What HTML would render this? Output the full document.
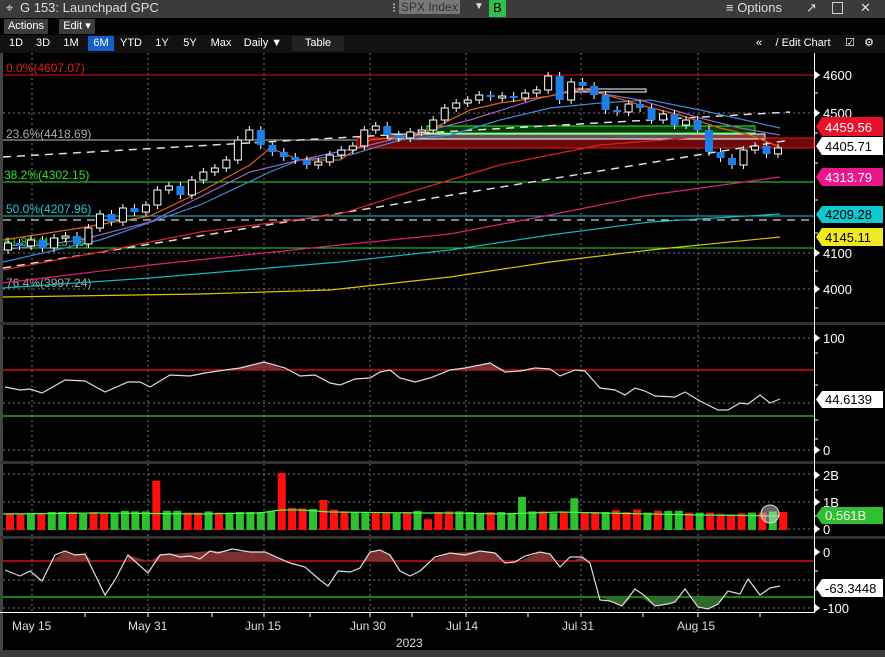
<!DOCTYPE html><html><head><meta charset="utf-8"><style>
body{margin:0;width:885px;height:657px;background:#000;overflow:hidden;font-family:"Liberation Sans",sans-serif;}
.top{position:absolute;left:0;top:0;width:885px;height:18px;background:#3b3b3b;color:#ddd;font-size:13px;}
.bar{position:absolute;left:0;width:885px;background:#000;}
.b{position:absolute;top:1px;height:15px;font-size:11px;color:#fff;line-height:15px;text-align:center;}
svg text{font-family:"Liberation Sans",sans-serif;}
</style></head><body>
<div class="top">
<span style="position:absolute;left:6px;top:0">⌖</span>
<span style="position:absolute;left:20px;top:0;font-size:13px">G 153: Launchpad GPC</span>
<span style="position:absolute;left:392px;top:0">⁝</span>
<span style="position:absolute;left:399px;top:0;background:#777;color:#333;padding:0 2px;font-size:12px">SPX Index</span>
<span style="position:absolute;left:474px;top:1px;font-size:10px">▼</span>
<span style="position:absolute;left:489px;top:0;width:17px;height:17px;background:#2ec24a;color:#000;text-align:center;font-size:13px">B</span>
<span style="position:absolute;left:726px;top:0">≡ Options</span>
<span style="position:absolute;left:806px;top:0">↗</span>
<span style="position:absolute;left:832px;top:2px;width:9px;height:10px;border:1px solid #ccc"></span>
<span style="position:absolute;left:860px;top:0">✕</span>
</div>
<div class="bar" style="top:18px;height:17px">
<div class="b" style="left:4px;width:44px;background:#3c3c3c">Actions ▾</div>
<div class="b" style="left:59px;width:36px;background:#3c3c3c">Edit ▾</div>
</div>
<div class="bar" style="top:35px;height:18px;background:#111">
<div class="b" style="left:6px;width:20px">1D</div><div class="b" style="left:33px;width:20px">3D</div>
<div class="b" style="left:61px;width:20px">1M</div><div class="b" style="left:88px;width:26px;background:#1560c8">6M</div>
<div class="b" style="left:118px;width:26px">YTD</div><div class="b" style="left:152px;width:20px">1Y</div>
<div class="b" style="left:180px;width:20px">5Y</div><div class="b" style="left:208px;width:26px">Max</div>
<div class="b" style="left:240px;width:46px">Daily ▼</div><div class="b" style="left:292px;width:52px;background:#222">Table</div>
<div class="b" style="left:752px;width:14px">«</div><div class="b" style="left:768px;width:70px">/ Edit Chart</div>
<div class="b" style="left:843px;width:14px">☑</div><div class="b" style="left:862px;width:14px">⚙</div>
</div>
<svg id="s" width="885" height="604" viewBox="0 53 885 604" style="position:absolute;left:0;top:53px">
<rect x="0" y="53" width="885" height="604" fill="#000"/>
<rect x="0" y="53" width="3" height="597" fill="#444"/>
<rect x="0" y="650" width="885" height="7" fill="#3a3a3a"/>
<rect x="0" y="322" width="885" height="3" fill="#333"/>
<rect x="0" y="461" width="885" height="3" fill="#333"/>
<rect x="0" y="536" width="885" height="3" fill="#333"/>
<rect x="0" y="612" width="814" height="1" fill="#fff"/>
<rect x="814" y="53" width="1" height="560" fill="#fff"/>
<g id="g"></g>
</svg>
<script>
var g=document.getElementById('g'),h='';
function L(x1,y1,x2,y2,c,w,d){h+='<line x1="'+x1+'" y1="'+y1+'" x2="'+x2+'" y2="'+y2+'" stroke="'+c+'" stroke-width="'+(w||1)+'"'+(d?' stroke-dasharray="'+d+'"':'')+'/>';}
function P(p,c,w,d){h+='<polyline fill="none" points="'+p+'" stroke="'+c+'" stroke-width="'+(w||1)+'"'+(d?' stroke-dasharray="'+d+'"':'')+'/>';}
function T(x,y,t,c,s){h+='<text x="'+x+'" y="'+y+'" fill="'+c+'" font-size="'+(s||12)+'">'+t+'</text>';}
[32,148,264,370,466,581,698].forEach(function(x){[[53,322],[325,461],[464,536],[539,612]].forEach(function(r){L(x,r[0],x,r[1],'#777',1,'2,3');});});
[113,253,289,338,403,450,474,502,529,580,608].forEach(function(y){L(3,y,814,y,'#777',1,'2,3');});
L(3,75,814,75,'#e01010');L(3,140,814,140,'#bbb');L(3,182,814,182,'#2ee02e');L(3,216,814,216,'#20c8d0');L(3,220,814,220,'#fff',1,'8,6');L(3,248,814,248,'#20e020');
T(6,72,'0.0%(4607.07)','#e02020');T(6,138,'23.6%(4418.69)','#aaa');T(4,179,'38.2%(4302.15)','#2ee02e');T(6,213,'50.0%(4207.96)','#20c8d0');T(4,246,'61.8%(4113.78)','#2ee02e');T(6,287,'76.4%(3997.24)','#aaa');
h+='<rect x="357" y="138" width="457" height="10" fill="#6a0a0a" stroke="#ff1010"/>';
h+='<rect x="427" y="126" width="328" height="7" fill="#0a3a0a" stroke="#20ff20"/>';
h+='<rect x="388" y="134" width="377" height="5" fill="#555" stroke="#fff"/>';
h+='<rect x="575" y="89" width="71" height="3" fill="none" stroke="#fff"/>';
L(3,157,790,112,'#ddd',1.5,'8,6');L(3,268,790,140,'#ddd',1.5,'8,6');
P('3,297 200,294 330,290 450,277 550,262 650,250 780,237','#d8c800',1.2);
P('3,288 150,278 340,262 450,250 550,235 650,222 780,214','#10b8c8',1.2);
P('3,283 150,265 340,245 450,234 550,215 650,195 780,177','#e0207a',1.2);
P('3,270 100,252 200,232 340,214 400,195 500,165 600,145 700,137 770,138','#e02020',1.2);
P('3,262 100,240 200,205 270,172 300,160 350,155 400,140 450,135 500,120 550,108 600,103 650,100 700,110 780,128','#3a8ad8',1.2);
P('3,250 80,240 150,222 250,172 300,160 370,145 470,120 540,98 580,90 640,100 700,118 740,128 780,135','#9a60c0',1.2);
P('3,240 80,228 150,216 200,192 250,165 270,148 300,160 340,160 370,140 420,135 470,110 500,103 550,96 580,88 600,93 640,105 680,115 720,128 750,135 780,147','#e06010',1.2);
var cy=[243,246,240,248,238,236,244,228,214,222,208,212,205,190,186,195,180,172,168,160,140,130,145,152,157,160,165,162,155,150,146,130,126,135,138,132,130,120,108,103,100,95,97,96,98,93,90,76,100,82,86,95,110,112,104,108,120,114,125,120,130,152,158,165,150,146,154,148];
var n=cy.length,sp=(778-8)/(n-1),pv=250;
cy.forEach(function(c,i){var x=8+i*sp,o=pv,top=Math.min(o,c),bt=Math.max(o,c);if(bt-top<2)bt=top+2;
L(x,top-4,x,bt+4,'#fff',1);
if(c<o)h+='<rect x="'+(x-3.5)+'" y="'+top+'" width="7" height="'+(bt-top)+'" fill="#000" stroke="#fff"/>';
else h+='<rect x="'+(x-4)+'" y="'+top+'" width="8" height="'+(bt-top)+'" fill="#1f7fe8"/>';pv=c;});
L(3,370,814,370,'#ff1010',1.2);L(3,416,814,416,'#20d020',1.2);
var rsi='5,387 20,390 30,389 42,393 65,380 85,381 105,392 128,382 140,382 150,387 170,375 190,376 205,373 225,370 240,368 264,362 285,368 300,376 315,375 330,383 340,385 355,379 370,378 380,372 390,370 400,378 415,382 430,378 450,370 465,368 490,363 505,372 520,371 535,368 550,369 560,376 575,370 585,371 600,388 615,390 625,395 635,388 645,391 655,396 675,397 685,392 700,401 718,410 728,410 740,403 748,404 760,395 770,403 780,399';
h+='<polygon points="225,370 240,368 264,362 285,370" fill="#7a3030"/><polygon points="450,370 465,368 490,363 505,370" fill="#7a3030"/>';
P(rsi,'#ddd',1.2);
var hs=[28,27,27,27,30,30,30,27,30,29,29,32,31,31,82,32,32,29,29,31,29,29,30,30,30,32,95,37,36,35,35,34,31,50,30,30,29,28,30,32,18,30,31,31,30,28,30,30,28,32,31,31,28,30,53,30,30,30,33,30,34,29,32,32,32,29,29,29,27,26,28,29,29,31,30,28,32,27,29,28];
hs[49]=55;hs[30]=50;hs[33]=30;hs[14]=82;
var reds=[0,1,3,6,8,9,14,17,18,20,26,27,28,30,31,32,35,36,38,40,41,42,46,51,53,55,56,58,59,60,62,65,67,68,69,70,72,74];
for(var i=0;i<75;i++){var x=6+i*10.45,hh=hs[i]*0.6;var c=reds.indexOf(i)>=0?'#ff1010':'#2ec02e';h+='<rect x="'+x+'" y="'+(530-hh)+'" width="8" height="'+hh+'" fill="'+c+'"/>';}
P('3,514 100,513 200,514 260,513 280,510 300,510 330,512 420,513 450,513 500,514 560,512 600,513 650,514 700,515 780,516','#40ff40',1.2);
h+='<circle cx="770" cy="514" r="9" fill="rgba(220,220,220,0.45)" stroke="#ddd"/>';
L(3,561,814,561,'#ff1010',1.2);L(3,597,814,597,'#20d020',1.2);
var os='5,570 20,576 30,571 42,581 55,555 65,551 75,555 85,554 105,595 115,580 128,555 148,573 160,555 170,554 180,557 190,556 200,559 210,551 218,553 232,549 250,552 265,552 290,563 305,567 320,580 328,586 338,571 350,572 360,568 370,552 380,550 390,555 400,571 410,576 420,571 435,557 450,553 465,555 480,551 495,553 505,563 515,562 525,556 540,552 550,554 560,567 570,557 582,557 590,563 600,600 610,601 622,606 635,589 645,596 655,606 668,604 675,602 685,589 698,607 708,609 718,604 728,591 740,594 748,579 760,595 770,588 780,586';
h+='<polygon points="52,561 65,551 75,555 85,554 92,561" fill="#7a3030"/><polygon points="128,561 128,555 148,561" fill="#7a3030"/><polygon points="150,561 160,555 210,551 250,552 265,552 285,561" fill="#7a3030"/><polygon points="365,561 370,552 380,550 390,555 395,561" fill="#7a3030"/><polygon points="430,561 450,553 480,551 495,553 503,561" fill="#7a3030"/><polygon points="520,561 540,552 550,554 556,561" fill="#7a3030"/><polygon points="572,561 582,557 590,561" fill="#7a3030"/>';
h+='<polygon points="600,597 610,601 622,606 632,597" fill="#2e6a2e"/><polygon points="640,597 655,606 668,604 675,602 680,597" fill="#2e6a2e"/><polygon points="692,597 698,607 708,609 718,604 725,597" fill="#2e6a2e"/>';
P(os,'#ddd',1.2);
function tick(y,t,c){L(814,y,820,y,'#fff');h+='<polygon points="815,'+(y-4)+' 820,'+y+' 815,'+(y+4)+'" fill="'+(c||'#fff')+'"/>';T(823,y+5,t,c||'#fff',13);}
tick(75,'4600');tick(113,'4500');tick(253,'4100');tick(289,'4000');tick(338,'100');tick(450,'0');
tick(475,'2B','#fff');tick(502,'1B');tick(529,'0');tick(552,'0');tick(608,'-100');
[93,133,163,200,233,271,308,353,385,420,439,490,516,571,590].forEach(function(y){L(814,y,818,y,'#fff');});
function tag(y1,y2,bg,fg,t){h+='<polygon points="816,'+((y1+y2)/2)+' 822,'+y1+' 883,'+y1+' 883,'+y2+' 822,'+y2+'" fill="'+bg+'"/>';T(825,y2-4,t,fg,13);}
tag(117,136,'#e8102a','#fff','4459.56');tag(137,155,'#fff','#000','4405.71');tag(168,186,'#e8168a','#fff','4313.79');tag(206,223,'#10c8d0','#000','4209.28');tag(228,246,'#f0e820','#000','4145.11');
tag(391,408,'#fff','#000','44.6139');tag(507,524,'#2ec02e','#fff','0.561B');tag(579,597,'#fff','#000','-63.3448');
[['May 15',12],['May 31',128],['Jun 15',245],['Jun 30',350],['Jul 14',446],['Jul 31',562],['Aug 15',677]].forEach(function(a){T(a[1],630,a[0],'#ddd',12);});
[85,148,212,264,310,370,412,466,528,581,643,698,760].forEach(function(x){L(x,612,x,617,'#fff');});
T(396,647,'2023','#ddd',12);
g.innerHTML=h;
</script>
</body></html>
